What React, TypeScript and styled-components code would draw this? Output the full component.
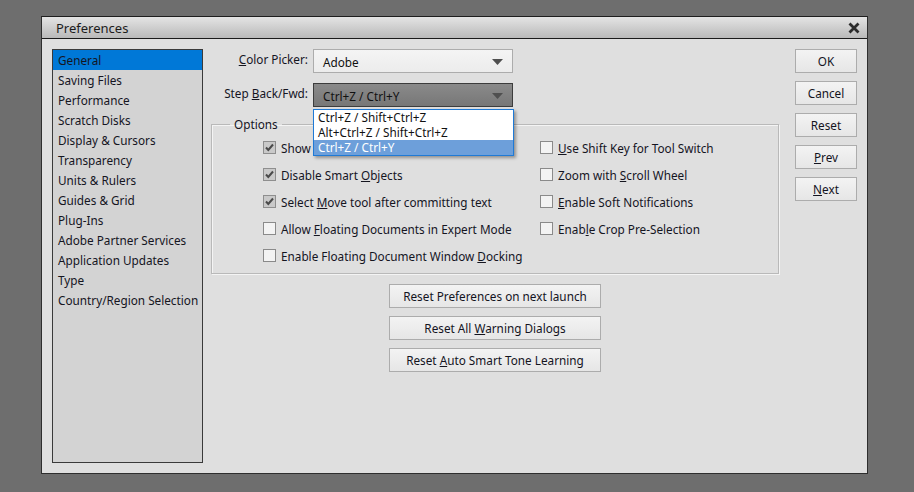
import React from 'react'
import styled, { createGlobalStyle } from 'styled-components'

const GlobalStyle = createGlobalStyle`
  html, body {
    margin: 0;
    padding: 0;
    background: #6e6e6e;
  }
  body {
    font-family: 'Noto Sans', 'DejaVu Sans', sans-serif;
    font-size: 11.75px;
    color: #15151f;
  }
  * {
    box-sizing: border-box;
  }
`

const categories = [
  'General',
  'Saving Files',
  'Performance',
  'Scratch Disks',
  'Display & Cursors',
  'Transparency',
  'Units & Rulers',
  'Guides & Grid',
  'Plug-Ins',
  'Adobe Partner Services',
  'Application Updates',
  'Type',
  'Country/Region Selection',
]

const stepOptions = ['Ctrl+Z / Shift+Ctrl+Z', 'Alt+Ctrl+Z / Shift+Ctrl+Z', 'Ctrl+Z / Ctrl+Y']

// label split around the access key: [before, key, after]
type Opt = { parts: [string, string, string]; checked: boolean }

const leftOptions: Opt[] = [
  { parts: ['Show ', 'T', 'ool Tips'], checked: true },
  { parts: ['Disable Smart ', 'O', 'bjects'], checked: true },
  { parts: ['Select ', 'M', 'ove tool after committing text'], checked: true },
  { parts: ['Allow ', 'F', 'loating Documents in Expert Mode'], checked: false },
  { parts: ['Enable Floating Document Window ', 'D', 'ocking'], checked: false },
]

const rightOptions: Opt[] = [
  { parts: ['', 'U', 'se Shift Key for Tool Switch'], checked: false },
  { parts: ['Zoom with ', 'S', 'croll Wheel'], checked: false },
  { parts: ['', 'E', 'nable Soft Notifications'], checked: false },
  { parts: ['Enab', 'l', 'e Crop Pre-Selection'], checked: false },
]

const Label = ({ parts }: { parts: [string, string, string] }) => (
  <span>
    {parts[0]}
    <Key>{parts[1]}</Key>
    {parts[2]}
  </span>
)

const CheckOption = ({ opt }: { opt: Opt }) => (
  <OptionRow>
    <Box checked={opt.checked}>
      {opt.checked && (
        <svg width='11' height='11' viewBox='0 0 11 11'>
          <path d='M2 5.5 L4.3 8 L9 2.5' fill='none' stroke='#4a4a4a' strokeWidth='2' />
        </svg>
      )}
    </Box>
    <Label parts={opt.parts} />
  </OptionRow>
)

const Arrow = () => (
  <svg width='11' height='6' viewBox='0 0 11 6'>
    <path d='M0 0 L11 0 L5.5 6 Z' fill='#4f4f4f' />
  </svg>
)

const App = () => {
  return (
    <>
      <GlobalStyle />
      <Dialog>
        <TitleBar>
          <Title>Preferences</Title>
          <Close>
            <svg width='12' height='12' viewBox='0 0 12 12'>
              <path d='M1.5 1.5 L10.5 10.5 M10.5 1.5 L1.5 10.5' stroke='#2b2b2b' strokeWidth='2.8' />
            </svg>
          </Close>
        </TitleBar>
        <Body>
          <CategoryList>
            {categories.map((c, i) => (
              <Category key={c} selected={i === 0}>
                {c}
              </Category>
            ))}
          </CategoryList>

          <Main>
            <FieldRow>
              <FieldLabel>
                <Key>C</Key>olor Picker:
              </FieldLabel>
              <Select>
                <span>Adobe</span>
                <Arrow />
              </Select>
            </FieldRow>
            <FieldRow>
              <FieldLabel>
                Step <Key>B</Key>ack/Fwd:
              </FieldLabel>
              <SelectWrap>
                <Select active>
                  <span>Ctrl+Z / Ctrl+Y</span>
                  <Arrow />
                </Select>
                <Menu>
                  {stepOptions.map((o, i) => (
                    <MenuItem key={o} highlighted={i === stepOptions.length - 1}>
                      {o}
                    </MenuItem>
                  ))}
                </Menu>
              </SelectWrap>
            </FieldRow>

            <Group>
              <Legend>Options</Legend>
              <OptionGrid>
                <OptionColumn>
                  {leftOptions.map((o) => (
                    <CheckOption key={o.parts.join('')} opt={o} />
                  ))}
                </OptionColumn>
                <OptionColumn>
                  {rightOptions.map((o) => (
                    <CheckOption key={o.parts.join('')} opt={o} />
                  ))}
                </OptionColumn>
              </OptionGrid>
            </Group>

            <ResetButtons>
              <Button wide>
                <span>Reset Preferences on next launch</span>
              </Button>
              <Button wide>
                <span>
                  Reset All <Key>W</Key>arning Dialogs
                </span>
              </Button>
              <Button wide>
                <span>
                  Reset <Key>A</Key>uto Smart Tone Learning
                </span>
              </Button>
            </ResetButtons>
          </Main>

          <SideButtons>
            <Button>OK</Button>
            <Button>Cancel</Button>
            <Button>Reset</Button>
            <Button>
              <span>
                <Key>P</Key>rev
              </span>
            </Button>
            <Button>
              <span>
                <Key>N</Key>ext
              </span>
            </Button>
          </SideButtons>
        </Body>
      </Dialog>
    </>
  )
}

const Dialog = styled.div`
  margin: 16px 0 0 41px;
  width: 827px;
  height: 458px;
  display: flex;
  flex-direction: column;
  background: #dfdfdf;
  border: 1px solid #2e2e2e;
  border-top-color: #1e1e1e;
`

const TitleBar = styled.div`
  height: 22px;
  display: flex;
  align-items: center;
  justify-content: space-between;
  padding: 0 7px 0 14px;
  background: linear-gradient(#e4e4e4, #b9b9b9);
  border-bottom: 1px solid #1a1a1a;
`

const Title = styled.div`
  font-size: 13px;
  color: #1c1c1c;
`

const Close = styled.div`
  display: flex;
  align-items: center;
`

const Body = styled.div`
  flex: 1;
  display: flex;
  padding: 10px;
`

const CategoryList = styled.div`
  width: 151px;
  background: #d3d3d3;
  border: 1px solid #3a3a3a;
`

const Category = styled.div<{ selected?: boolean }>`
  height: 20px;
  line-height: 21px;
  padding-left: 5px;
  white-space: nowrap;
  background: ${(p) => (p.selected ? '#0078d7' : 'transparent')};
`

const Main = styled.div`
  margin-left: 8px;
  width: 568px;
  display: flex;
  flex-direction: column;
`

const FieldRow = styled.div`
  display: grid;
  grid-template-columns: 97px 200px;
  column-gap: 5px;
  align-items: center;
  height: 24px;
  & + & {
    margin-top: 10px;
  }
`

const FieldLabel = styled.div`
  text-align: right;
  white-space: nowrap;
  padding-bottom: 4px;
`

const SelectWrap = styled.div`
  position: relative;
  height: 24px;
`

const Select = styled.div<{ active?: boolean }>`
  height: 24px;
  display: flex;
  align-items: center;
  justify-content: space-between;
  padding: 1px 9px 0 9px;
  border: 1px solid ${(p) => (p.active ? '#3c3c3c' : '#acacac')};
  background: ${(p) =>
    p.active ? 'linear-gradient(#8a8a8a, #777777)' : 'linear-gradient(#f4f4f4, #ececec)'};
  color: #111;
`

const Menu = styled.div`
  position: absolute;
  top: 26px;
  left: 0;
  width: 201px;
  background: #fff;
  border: 1px solid #1f7ad6;
  box-shadow: 2px 2px 3px rgba(0, 0, 0, 0.35);
  z-index: 2;
`

const MenuItem = styled.div<{ highlighted?: boolean }>`
  height: 15px;
  line-height: 15px;
  padding-left: 4px;
  white-space: nowrap;
  background: ${(p) => (p.highlighted ? '#6d9fda' : 'transparent')};
  color: ${(p) => (p.highlighted ? '#fff' : '#111')};
`

const Group = styled.fieldset`
  margin: 9px 0 0 0;
  padding: 2px 0 4px 0;
  border: 1px solid #b9b9b9;
  box-shadow: inset 1px 1px 0 #f4f4f4, 1px 1px 0 #f4f4f4;
  min-width: 0;
`

const Legend = styled.legend`
  margin-left: 18px;
  padding: 0 4px;
  line-height: 16px;
`

const OptionGrid = styled.div`
  display: grid;
  grid-template-columns: 277px 1fr;
  padding-left: 51px;
`

const OptionColumn = styled.div`
  display: flex;
  flex-direction: column;
`

const OptionRow = styled.div`
  height: 27px;
  display: flex;
  align-items: center;
  gap: 5px;
  white-space: nowrap;
`

const Box = styled.div<{ checked?: boolean }>`
  width: 13px;
  height: 13px;
  flex: none;
  display: flex;
  align-items: center;
  justify-content: center;
  border: 1px solid ${(p) => (p.checked ? '#8e8e8e' : '#8a8a8a')};
  background: ${(p) => (p.checked ? '#c9c9c9' : '#f3f3f3')};
`

const Key = styled.span`
  text-decoration: underline;
  text-underline-offset: 1px;
`

const ResetButtons = styled.div`
  margin-top: 10px;
  display: flex;
  flex-direction: column;
  align-items: center;
  gap: 8px;
`

const Button = styled.div<{ wide?: boolean }>`
  width: ${(p) => (p.wide ? '212px' : '62px')};
  height: 24px;
  display: flex;
  align-items: center;
  justify-content: center;
  white-space: nowrap;
  border: 1px solid #acacac;
  background: linear-gradient(#f3f3f3, #e6e6e6);
  color: #14141e;
`

const SideButtons = styled.div`
  margin-left: 16px;
  display: flex;
  flex-direction: column;
  gap: 8px;
`

export default App
